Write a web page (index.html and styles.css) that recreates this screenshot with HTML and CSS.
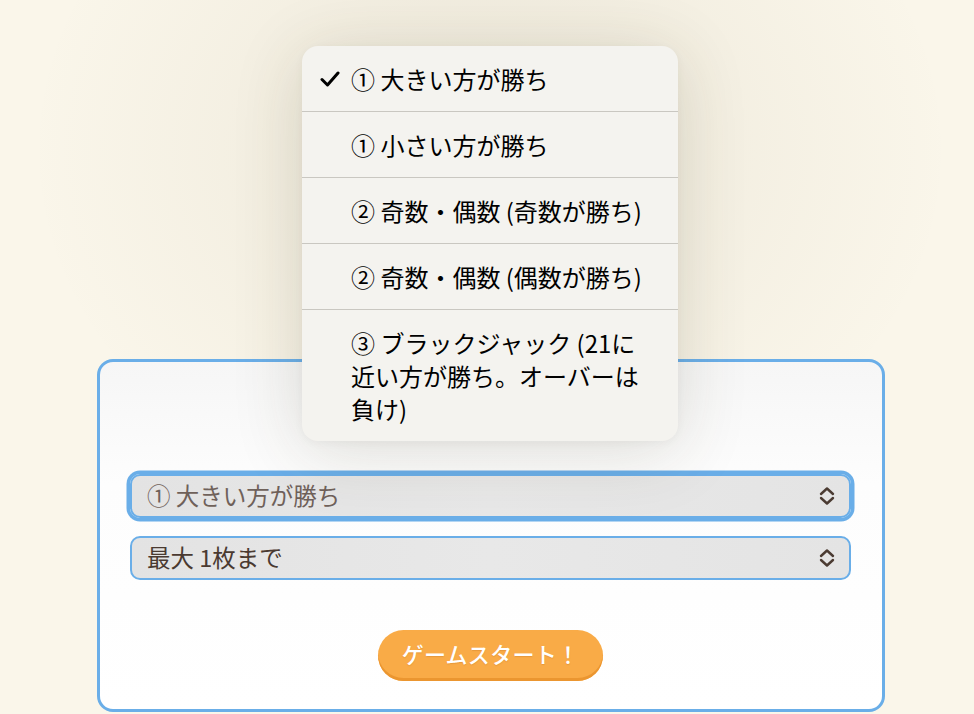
FILE: index.html
```html
<!DOCTYPE html>
<html lang="ja">
<head>
<meta charset="utf-8">
<title>ゲーム設定</title>
<link rel="stylesheet" href="styles.css">
</head>
<body>
<main class="stage">
  <section class="card">
    <div class="fields">
      <div class="select select-focus">
        <span class="select-text muted">① 大きい方が勝ち</span>
        <svg class="chev" viewBox="0 0 16 20" width="16" height="20" aria-hidden="true"><path d="M2 8 L8 2.5 L14 8 M2 12 L8 17.5 L14 12" fill="none" stroke="#4b3b32" stroke-width="2.4" stroke-linecap="round" stroke-linejoin="round"/></svg>
      </div>
      <div class="select">
        <span class="select-text">最大 1枚まで</span>
        <svg class="chev" viewBox="0 0 16 20" width="16" height="20" aria-hidden="true"><path d="M2 8 L8 2.5 L14 8 M2 12 L8 17.5 L14 12" fill="none" stroke="#4b3b32" stroke-width="2.4" stroke-linecap="round" stroke-linejoin="round"/></svg>
      </div>
    </div>
    <div class="actions">
      <button class="start">ゲームスタート！</button>
    </div>
  </section>

  <ul class="menu">
    <li class="item">
      <span class="check"><svg viewBox="0 0 20 16" width="20" height="16" aria-hidden="true"><path d="M2 8.5 L7.5 14 L18 2" fill="none" stroke="#000" stroke-width="3" stroke-linecap="round" stroke-linejoin="round"/></svg></span>
      <span class="label">① 大きい方が勝ち</span>
    </li>
    <li class="item"><span class="check"></span><span class="label">① 小さい方が勝ち</span></li>
    <li class="item"><span class="check"></span><span class="label">② 奇数・偶数 (奇数が勝ち)</span></li>
    <li class="item"><span class="check"></span><span class="label">② 奇数・偶数 (偶数が勝ち)</span></li>
    <li class="item"><span class="check"></span><span class="label">③ ブラックジャック (21に近い方が勝ち。オーバーは負け)</span></li>
  </ul>
</main>
</body>
</html>
```

FILE: styles.css
```css
* { box-sizing: border-box; }

html, body {
  margin: 0;
  padding: 0;
  height: 714px;
  overflow: hidden;
}

body {
  background: #faf6ea;
  font-family: "Noto Sans CJK JP", "Noto Sans", sans-serif;
  color: #000;
}

.stage {
  position: relative;
  height: 714px;
  padding-top: 359px;
  background: radial-gradient(ellipse 460px 380px at 490px 150px, rgba(120,105,70,0.10), rgba(120,105,70,0) 100%);
}

.card {
  margin-left: 97px;
  width: 788px;
  border: 3px solid #6aaee8;
  border-radius: 16px;
  background: linear-gradient(180deg, #f6f6f6 0%, #fdfdfd 35%, #ffffff 100%);
  padding: 112px 31px 28px 30px;
}

.fields {
  display: flex;
  flex-direction: column;
  gap: 18px;
}

.select {
  height: 44px;
  border: 2.5px solid #6aaee8;
  border-radius: 10px;
  background: linear-gradient(90deg, #e3e3e3, #e8e8e8 50%, #e4e4e4);
  display: flex;
  align-items: center;
  justify-content: space-between;
  padding: 0 14px 0 15px;
}

.select-focus {
  box-shadow: 0 0 0 3.5px #6aaee8;
}

.select-text {
  font-size: 23.5px;
  line-height: 1;
  color: #4a3a31;
}

.select-text.muted {
  color: #6f615a;
}

.chev { display: block; }

.actions {
  display: flex;
  justify-content: center;
  margin-top: 50px;
}

.start {
  width: 225px;
  height: 51px;
  border: none;
  border-radius: 26px;
  background: #f9ab47;
  box-shadow: inset 0 -3px 0 #eb9630;
  color: #fff;
  font-family: "Noto Sans CJK JP", "Noto Sans", sans-serif;
  font-size: 22px;
  font-weight: 500;
  letter-spacing: 0.3px;
  padding: 0 0 6px;
  text-shadow: 0 1px 1px rgba(180,100,20,0.25);
}

.menu {
  position: absolute;
  left: 302px;
  top: 46px;
  width: 376px;
  margin: 0;
  padding: 0;
  list-style: none;
  background: #f4f3ef;
  border-radius: 16px;
  box-shadow: 0 10px 70px rgba(70,60,30,0.16), 0 2px 10px rgba(0,0,0,0.04);
  overflow: hidden;
}

.item {
  display: grid;
  grid-template-columns: 31px 1fr;
  padding: 16px 22px 16px 18px;
  font-size: 24px;
  line-height: 33px;
  color: #000;
}

.item + .item {
  border-top: 1px solid #c9c7c1;
}

.check {
  display: flex;
  align-items: center;
  height: 33px;
}

.check svg { display: block; }

.label {
  word-break: normal;
}
```
